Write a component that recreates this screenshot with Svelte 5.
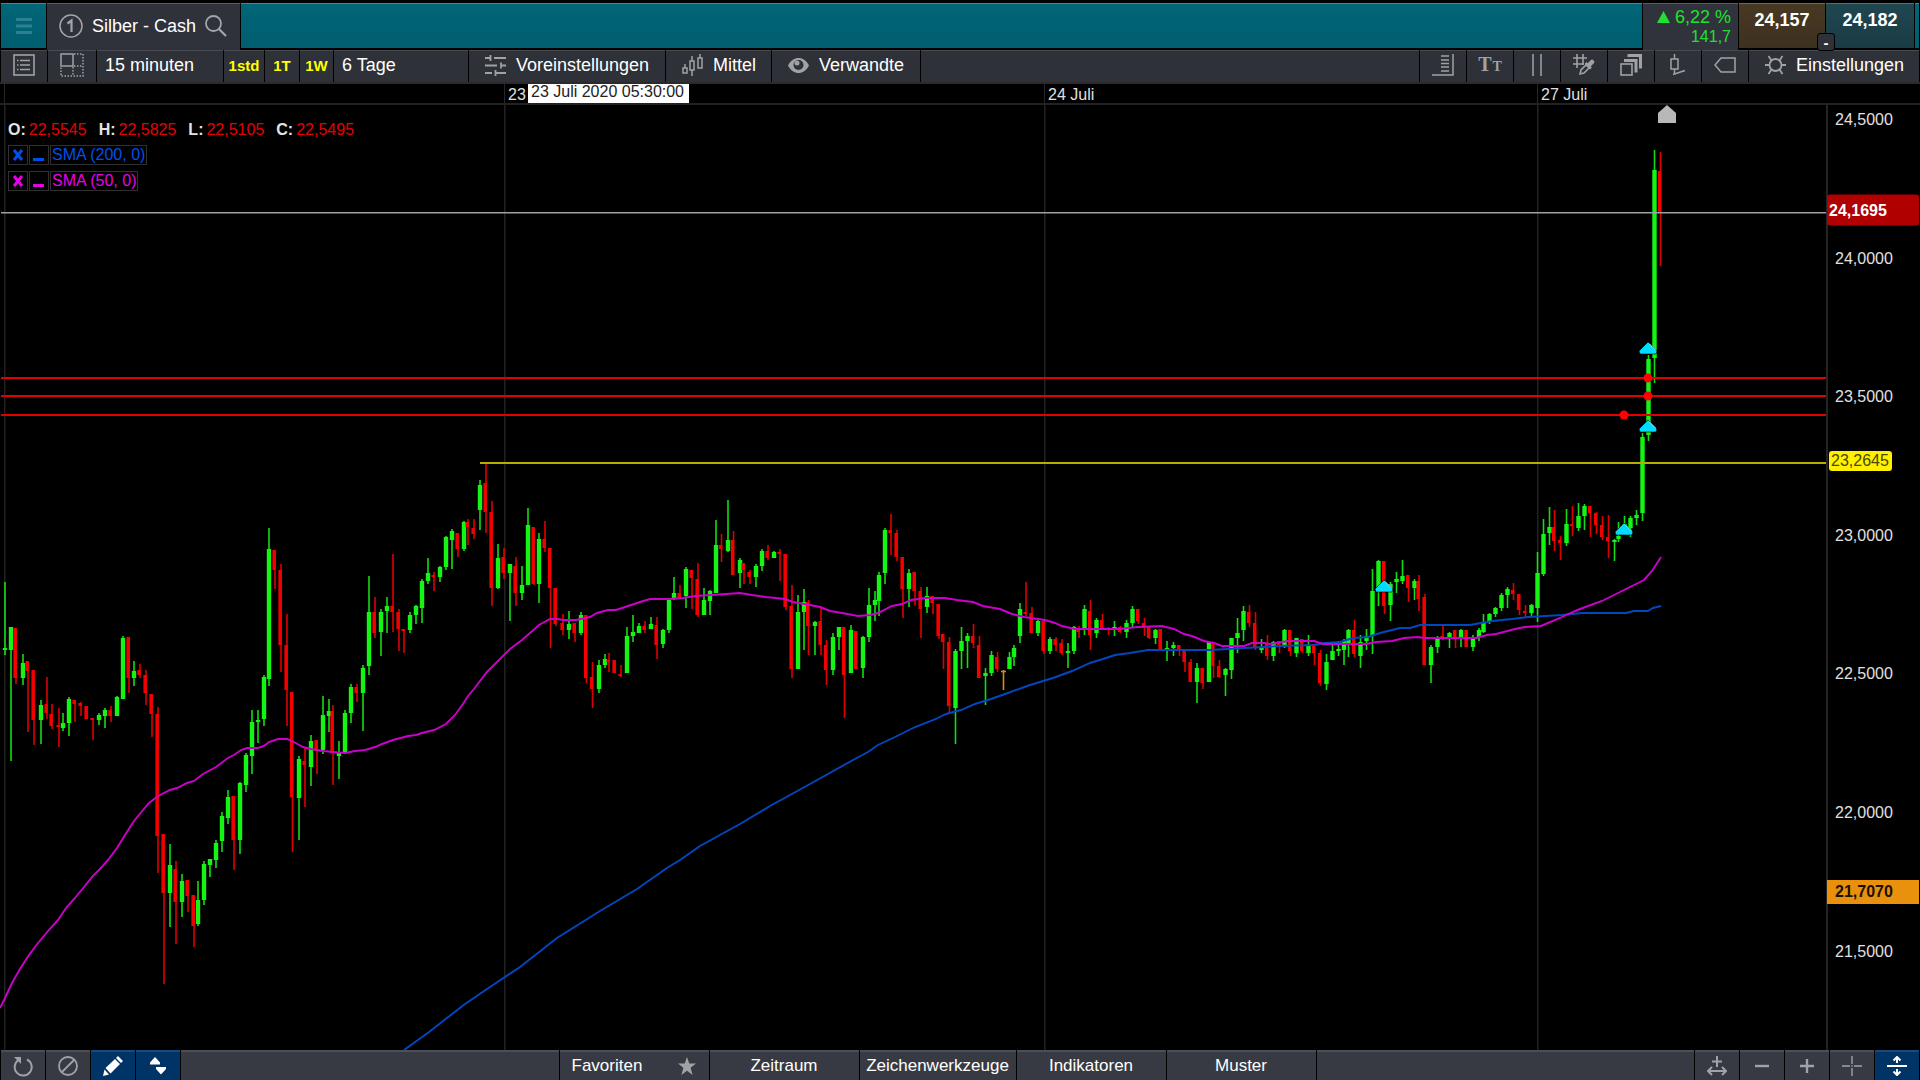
<script lang="ts">
  // Plot space: x runs 0..1826, y runs 105..1050 (one unit per chart pixel).
  const PLOT = { width: 1826, top: 105, height: 945 };

  // Price scale: 24.5 sits at y 120, half a unit takes 138.6.
  const priceY = (price: number) => 120 + (24.5 - price) * 277.2;
  const pctY = (price: number) => ((priceY(price) - PLOT.top) / PLOT.height) * 100;
  const pctX = (x: number) => (x / PLOT.width) * 100;
  const fmt = (price: number) => price.toFixed(4).replace(".", ",");

  const ticks = [24.5, 24, 23.5, 23, 22.5, 22, 21.5];

  const days = [
    { x: 4, label: "" },
    { x: 504, label: "23" },
    { x: 1044, label: "24 Juli" },
    { x: 1537, label: "27 Juli" },
  ];

  const ohlc = [
    { key: "O", value: 22.5545 },
    { key: "H", value: 22.5825 },
    { key: "L", value: 22.5105 },
    { key: "C", value: 22.5495 },
  ];

  const studies = [
    { name: "SMA (200, 0)", tone: "blue" },
    { name: "SMA (50, 0)", tone: "pink" },
  ];

  const alerts = [377, 395, 414];

  const triangles = [
    [1384, 580],
    [1624, 523],
    [1648, 420],
    [1648, 342],
  ];

  const dots = [
    [1648, 377],
    [1648, 395],
    [1624, 414],
  ];

  // x, high, open, close, low
  const candles = [
    [5,582,650,648,655],[11,627,650,627,761],[16,628,628,678,684],[23,654,678,663,685],[28,661,661,671,732],
    [34,670,670,720,745],[41,700,720,705,744],[47,677,704,713,719],[52,704,714,726,729],[59,708,725,726,747],
    [63,713,728,723,731],[69,697,723,699,736],[75,700,700,704,722],[81,702,703,706,716],[87,706,706,719,719],
    [93,718,718,720,740],[99,713,720,715,725],[105,708,716,710,728],[111,706,710,716,722],[117,696,716,697,716],
    [123,636,699,638,699],[129,637,637,678,693],[134,661,678,671,686],[140,664,670,675,678],[146,670,675,693,705],
    [152,694,694,714,737],[158,707,714,836,873],[164,834,834,893,984],[170,844,893,865,927],[176,861,869,902,944],
    [182,874,902,881,917],[188,880,880,896,912],[194,895,895,926,947],[198,881,924,900,926],[204,861,900,864,905],
    [210,859,865,859,877],[216,840,860,843,868],[222,812,841,816,852],[228,790,818,797,824],[234,796,796,840,870],
    [240,782,840,783,854],[246,753,785,755,792],[252,710,756,722,774],[258,710,722,720,743],[264,675,719,677,726],
    [269,528,679,549,686],[275,550,550,570,589],[281,564,570,645,672],[287,614,645,690,726],[292.5,692,692,797,852],
    [299,756,798,759,840],[305,747,761,765,807],[311,735,767,741,786],[317,740,740,751,774],[323,696,750,715,754],
    [329,699,716,711,732],[333,705,711,753,785],[339,741,756,753,779],[345,710,753,713,754],[351,684,713,687,723],
    [357,684,687,693,702],[363,665,693,668,731],[369,576,666,612,675],[375,597,612,633,638],[381,609,632,612,656],
    [387,597,611,606,633],[393,554,606,612,632],[399,609,612,629,651],[404,629,629,630,653],[410,612,630,615,633],
    [416,605,615,606,624],[422,579,608,581,623],[428,558,581,573,584],[434,572,575,577,591],[440,566,577,567,582],
    [446,536,567,537,570],[452,529,540,531,569],[458,533,533,549,557],[464,521,549,522,551],[468,519,522,527,545],
    [474,519,528,534,539],[480,480,510,485,530],[486,463,483,512,533],[492,501,512,588,606],[498,544,588,558,589],
    [504,548,557,573,579],[510,564,573,564,621],[516,557,566,593,606],[522,566,593,585,600],[528,508,585,525,585],
    [534,527,527,584,585],[539,533,584,539,603],[545,521,539,548,552],[550.5,548,548,588,648],[556,588,588,624,626],
    [563,614,623,630,635],[569,611,630,624,639],[575,623,623,633,642],[581,612,633,615,635],[586.5,615,615,678,683],
    [592.5,662,677,689,708],[599,660,689,665,693],[605,654,665,659,668],[609,653,660,662,672],[615,660,660,673,673],
    [621,665,674,675,677],[627,627,673,636,673],[633,615,636,632,642],[639,623,633,626,633],[645,621,626,630,633],
    [651,617,629,624,629],[657,617,625,645,659],[663,629,644,630,648],[669,599,630,600,633],[674,577,598,593,600],
    [680,585,593,598,598],[686,567,596,569,608],[692,570,570,578,609],[698,563,579,615,617],[704,588,615,600,615],
    [710,590,601,591,615],[716,520,593,545,593],[721.5,534,545,549,562],[728,500,551,540,552],[733.5,531,540,575,575],
    [740,558,573,560,588],[744,563,563,570,584],[750,570,572,577,584],[756,564,577,566,587],[762,549,566,551,571],
    [768,545,551,558,560],[774,551,558,552,558],[780,549,552,553,581],[786,554,554,607,610],[792,585,606,669,678],
    [798,595,669,612,669],[804,589,612,602,650],[808.5,600,602,626,655],[815,621,626,622,655],[821,606,621,645,655],
    [826.5,640,645,670,685],[833,633,670,637,675],[839,627,637,627,650],[844.5,627,627,675,718],[851,625,673,630,673],
    [856.5,631,631,669,669],[863,636,668,637,678],[869,588,637,605,642],[875,591,605,600,621],[879,572,601,575,616],
    [885,528,573,530,584],[891,514,530,533,555],[897,530,533,557,561],[903,557,557,589,618],[909,569,589,573,607],
    [915,572,572,591,605],[921,587,591,609,638],[927,587,607,596,613],[933,596,596,603,614],[939,604,604,636,639],
    [943.5,634,634,642,669],[949.5,637,642,706,713],[955.5,649,708,651,744],[961.5,627,651,641,669],[967.5,633,641,636,668],
    [973.5,624,636,643,648],[979.5,636,645,678,678],[985.5,668,676,673,705],[991.5,651,673,655,676],[997.5,652,657,669,672],
    [1009.5,652,669,657,669],[1014,645,657,648,666],[1020,603,636,609,643],[1026,582,612,614,616],[1032,607,613,633,633],
    [1038,619,633,621,636],[1044,619,621,651,654],[1050,637,651,639,654],[1056,637,639,645,651],[1062,639,643,653,655],
    [1068,643,653,651,668],[1074,626,651,627,654],[1079,626,628,632,638],[1084.5,605,629,609,635],[1090.5,600,611,635,650],
    [1096.5,618,633,620,638],[1102.5,614,620,629,629],[1108.5,627,628,629,635],[1114.5,621,629,627,636],[1120.5,626,627,632,633],
    [1126.5,620,632,623,638],[1132.5,606,623,609,627],[1138.5,609,609,621,624],[1144.5,618,623,627,636],[1149.5,627,627,638,639],
    [1155.5,629,638,630,644],[1161,629,629,649,649],[1167,641,650,648,661],[1173.5,642,648,645,656],[1179.5,645,645,649,656],
    [1185,651,651,662,672],[1191,659,662,682,682],[1197,663,682,668,703],[1203,668,668,683,689],[1209,642,682,642,682],
    [1213.5,642,642,666,678],[1219.5,660,666,677,678],[1225.5,668,675,669,696],[1231.5,638,670,638,679],[1237.5,618,638,633,653],
    [1243.5,606,630,611,641],[1249.5,605,612,623,627],[1255.5,612,623,648,650],[1261.5,639,650,647,653],[1267.5,635,644,656,660],
    [1273.5,641,656,642,661],[1279.5,641,641,647,653],[1284.5,629,645,630,648],[1290.5,630,630,651,656],[1296.5,638,653,638,657],
    [1302.5,639,639,651,653],[1308.5,635,653,645,656],[1314.5,644,644,653,665],[1320.5,650,653,683,686],[1326.5,654,684,662,690],
    [1332.5,642,660,651,660],[1338.5,641,651,649,656],[1344,639,650,641,665],[1348.5,629,644,630,657],[1354.5,620,630,654,657],
    [1360.5,635,656,642,668],[1366.5,629,641,636,650],[1372.5,569,636,591,654],[1378.5,560,590,561,606],[1384.5,561,561,606,614],
    [1390.5,582,605,584,621],[1396.5,572,582,579,593],[1402.5,560,581,576,584],[1408.5,575,575,588,602],[1414.5,579,588,581,600],
    [1419,575,581,599,611],[1425,594,597,665,665],[1431,645,665,647,683],[1437.5,636,647,639,653],[1443,626,636,638,640],
    [1449.5,632,638,633,648],[1455.5,630,630,638,648],[1461,629,638,630,647],[1467,630,630,647,647],[1473,635,647,637,651],
    [1479,628,637,630,641],[1483.5,614,632,622,633],[1489.5,613,622,614,624],[1495.5,607,614,608,617],[1501.5,593,608,595,611],
    [1507.5,587,595,589,608],[1513.5,583,590,594,600],[1519.5,594,594,610,615],[1525.5,605,611,612,617],[1531.5,604,613,605,617],
    [1537.5,552,608,573,622],[1543.5,519,574,534,576],[1549.5,507,533,527,545],[1554.5,510,527,541,551],[1560.5,536,540,543,560],
    [1566.5,509,543,524,546],[1572.5,506,524,525,536],[1578.5,503,528,516,531],[1584.5,504,516,506,530],[1590.5,506,506,513,537],
    [1596.5,512,513,525,534],[1602.5,516,525,537,540],[1608.5,515,537,541,558],[1614.5,539,542,540,561],[1618.5,522,539,536,542],
    [1624.5,516,530,524,532],[1630.5,516,528,518,537],[1636.5,510,518,515,525],[1642.5,433,513,437,521],[1648.5,355,435,359,441],
    [1654.5,150,358,170,383],[1660.5,152,171,213,266],
  ].map(([x, high, open, close, low]) => ({
    x,
    high,
    low,
    up: close < open,
    top: Math.min(open, close),
    size: Math.max(Math.abs(close - open), 2),
  }));

  const sma50 =
    "0,1008 5,998 12,983 20,969 29,955 38,943 48,931 58,920 66,908 75,898 84,887 93,876 100,869 108,860 117,848 125,835 134,821 143,810 149,803 158,796 170,790 177,788 187,783 194,781 203,774 216,767 228,758 234,755 241,750 247,748 258,748 264,746 269,742 278,739 287,739 294,742 303,747 311,749 323,751 333,752 345,753 355,751 365,750 375,747 382,744 393,740 408,736 416,735 422,733 434,730 446,724 455,715 463,704 468,696 474,689 480,681 487,672 498,661 510,649 522,640 530,633 539,625 550,619 558,619 563,620 576,620 590,617 597,613 608,610 616,610 628,606 640,602 650,599 670,599 683,598 695,596 710,595 726,594 740,593 752,595 766,597 785,599 793,602 810,605 820,607 830,611 842,613 858,616 870,615 878,613 892,606 902,604 911,600 925,598 945,598 957,600 973,602 983,606 1000,609 1012,614 1024,617 1045,620 1055,623 1062,626 1075,629 1118,629 1138,627 1162,626 1174,629 1184,634 1192,636 1204,641 1214,643 1222,646 1244,646 1252,643 1264,643 1270,644 1288,641 1314,641 1323,644 1366,644 1376,642 1392,641 1404,638 1418,637 1424,638 1476,638 1487,635 1496,634 1515,629 1525,627 1541,626 1560,618 1568,614 1580,609 1602,601 1612,596 1644,580 1652,571 1661,557";

  const sma200 =
    "404,1050 429,1032 465,1004 490,987 520,967 557,938 600,911 637,889 667,868 680,860 700,846 740,824 770,806 810,784 853,760 868,752 878,745 895,737 915,727 936,719 946,714 961,710 975,704 991,699 1008,693 1030,685 1053,678 1072,671 1090,663 1103,659 1115,655 1130,653 1148,650 1210,650 1228,649 1244,648 1265,647 1280,646 1314,645 1325,643 1340,642 1353,638 1368,637 1380,633 1400,628 1410,628 1420,625 1470,625 1492,621 1512,619 1528,617 1545,616 1562,615 1582,613 1626,613 1634,611 1648,611 1653,608 1661,606";
</script>

<div class="app">
  <header class="titlebar">
    <button class="menu" aria-label="Menü">
      <svg width="16" height="16" viewBox="0 0 16 16"><path d="M0 1.5h16M0 8h16M0 14.500h16" stroke="#2c8090" stroke-width="3" /></svg>
    </button>
    <div class="tab">
      <svg width="24" height="24" viewBox="0 0 24 24" fill="none" stroke="#a3a5a9">
        <circle cx="12" cy="12" r="11" stroke-width="1.500" />
        <path d="M8.500 9.500l4-3V18" stroke-width="2.200" />
      </svg>
      <span>Silber - Cash</span>
      <button class="search" aria-label="Suchen">
        <svg width="22" height="22" viewBox="0 0 22 22" fill="none" stroke="#a3a5a9" stroke-width="1.800">
          <circle cx="8.500" cy="8.500" r="7.500" />
          <path d="M14 14l7 7" stroke-width="2.200" />
        </svg>
      </button>
    </div>
    <div class="strip"></div>
    <div class="change">
      <div class="pct">
        <svg width="13" height="12" viewBox="0 0 13 12"><path d="M6.500 0L13 12H0z" fill="#22e02f" /></svg>
        <span>6,22 %</span>
      </div>
      <div class="points">141,7</div>
    </div>
    <button class="quote sell">24,157</button>
    <button class="quote buy">24,182<span class="spread">-</span></button>
    <div class="edge"></div>
  </header>

  <nav class="toolbar">
    <button class="tool w46" aria-label="Liste">
      <svg width="22" height="22" viewBox="0 0 22 22" fill="none" stroke="#a0a2a6">
        <rect x="1" y="1" width="20" height="20" stroke-width="1.600" />
        <path d="M7 6.500h10M7 11h10M7 15.500h10" stroke-width="1.600" />
        <path d="M4 6.500h1.500M4 11h1.500M4 15.500h1.500" stroke-width="1.600" />
      </svg>
    </button>
    <button class="tool w48" aria-label="Layout">
      <svg width="24" height="24" viewBox="0 0 24 24" fill="none" stroke="#a0a2a6">
        <rect x="1" y="1" width="12" height="12" stroke-width="1.500" />
        <path d="M14 1h9v22H1V14M13 14v9M14 13h9" stroke-width="1.500" stroke-dasharray="1.500 1.500" />
      </svg>
    </button>
    <button class="tool label interval">15 minuten</button>
    <button class="tool quick w40">1std</button>
    <button class="tool quick w34">1T</button>
    <button class="tool quick w33">1W</button>
    <button class="tool label range">6 Tage</button>
    <button class="tool labeled presets">
      <svg width="21" height="21" viewBox="0 0 21 21" stroke="#a0a2a6" stroke-width="1.800" fill="none">
        <path d="M0 3h5M9 3h12M0 10.500h12M17 10.500h4M0 18h7M11 18h10M5.500 0v6M16 7.500v6M10.500 15v6" />
      </svg>
      <span>Voreinstellungen</span>
    </button>
    <button class="tool labeled middle">
      <svg width="21" height="22" viewBox="0 0 21 22" stroke="#a0a2a6" stroke-width="1.500" fill="none">
        <rect x="1" y="14" width="4" height="5" />
        <rect x="8" y="7" width="4" height="9" />
        <rect x="16" y="4" width="4" height="10" />
        <path d="M3 10v4M10 2v5M10 16v6M18 0v4" />
      </svg>
      <span>Mittel</span>
    </button>
    <button class="tool labeled related">
      <svg width="21" height="15" viewBox="0 0 21 15">
        <path d="M0 7.500C3 2 6.500 0 10.500 0S18 2 21 7.500C18 13 14.500 15 10.500 15S3 13 0 7.500z" fill="#a0a2a6" />
        <circle cx="10.500" cy="7" r="5" fill="#2e3138" />
        <circle cx="9" cy="5" r="2.500" fill="#a0a2a6" />
      </svg>
      <span>Verwandte</span>
    </button>
    <div class="tool spacer"></div>
    <button class="tool w46" aria-label="Preisskala">
      <svg width="22" height="22" viewBox="0 0 22 22" stroke="#a0a2a6" stroke-width="1.500" fill="none">
        <path d="M0 21h21V0M9 2h8M9 6h8M9 9.500h8M9 13h8M9 17h8" />
      </svg>
    </button>
    <button class="tool w46 type" aria-label="Schrift"><span class="big">T</span><span class="small">T</span></button>
    <button class="tool w46" aria-label="Parallel">
      <svg width="10" height="22" viewBox="0 0 10 22" stroke="#a0a2a6" stroke-width="1.500"><path d="M1 0v22M9 0v22" /></svg>
    </button>
    <button class="tool w46" aria-label="Rasterfarbe">
      <svg width="22" height="22" viewBox="0 0 22 22" stroke="#a0a2a6" stroke-width="1.600" fill="none">
        <path d="M0 4h14M0 10h11M4 0v14M10 0v11" />
        <path d="M7 20l1-4 6-6 3 3-6 6z" />
        <path d="M12.500 9l5.500 5.500" stroke-width="2.500" />
        <path d="M15.500 11.500L19 8" stroke-width="4.500" stroke-linecap="round" />
      </svg>
    </button>
    <button class="tool w46" aria-label="Ebenen">
      <svg width="22" height="22" viewBox="0 0 22 22" fill="none" stroke="#a0a2a6">
        <rect x="1" y="10" width="11" height="11" stroke-width="1.600" />
        <path d="M4 6.500h12v12M7.500 1.500h13v13" stroke-width="3" />
      </svg>
    </button>
    <button class="tool w46" aria-label="Kerzenwerkzeug">
      <svg width="16" height="22" viewBox="0 0 16 22" stroke="#a0a2a6" stroke-width="1.500" fill="none">
        <rect x="1" y="5" width="7" height="10" />
        <path d="M4.500 0v5M4.500 15v5M3 20.500l12-4" />
      </svg>
    </button>
    <button class="tool w46" aria-label="Etikett">
      <svg width="22" height="16" viewBox="0 0 22 16" stroke="#a0a2a6" stroke-width="1.500" fill="none"><path d="M7 1h14v14H7L1 8z" /></svg>
    </button>
    <button class="tool labeled settings">
      <svg width="21" height="20" viewBox="0 0 21 20" stroke="#a0a2a6" stroke-width="1.800" fill="none">
        <circle cx="10.500" cy="10" r="6" />
        <path d="M0 10h4.500M16.500 10H21M6.500 5.500L3.500 1M14.500 5.500l3-4.500M6.500 14.500l-3 4.500M14.500 14.500l3 4.500" />
      </svg>
      <span>Einstellungen</span>
    </button>
  </nav>

  <main class="chart">
    <div class="time-axis">
      {#each days as day}
        <div class="day" style:left="{pctX(day.x)}%">{day.label}</div>
      {/each}
      <div class="cursor-time" style:left="{pctX(528)}%">23 Juli 2020 05:30:00</div>
    </div>
    <div class="corner"></div>

    <div class="plot">
      <svg class="canvas" viewBox="0 {PLOT.top} {PLOT.width} {PLOT.height}">
        {#each days as day}
          <rect x={day.x} y="105" width="1.500" height="945" fill="#222" />
        {/each}

        {#each candles as c}
          <g fill={c.up ? "#14f514" : "#f50000"}>
            <rect x={c.x - 0.8} y={c.high} width="1.600" height={c.low - c.high} opacity="0.900" />
            <rect x={c.up ? c.x - 2.2 : c.x - 2.6} y={c.top} width={c.up ? 4.4 : 3.4} height={c.size} />
          </g>
        {/each}
        <path d="M1003.500 670v20M1001 671.500h5" stroke="#d98a10" stroke-width="1.600" />

        <polyline points={sma200} fill="none" stroke="#0048c0" stroke-width="1.900" />
        <polyline points={sma50} fill="none" stroke="#cc00cc" stroke-width="1.900" />

        <rect x="1" y="212" width="1825" height="1.500" fill="#a0a0a0" />
        {#each alerts as y}
          <rect x="1" {y} width="1825" height="2" fill="#e00000" />
        {/each}
        <rect x="480" y="462" width="1346" height="2" fill="#bcac00" />

        {#each dots as [x, y]}
          <circle cx={x} cy={y + 1} r="4.500" fill="#ff0000" />
        {/each}
        {#each triangles as [x, y]}
          <path d="M{x} {y}l9 9-1 3h-16l-1-3z" fill="#00dcff" stroke="#000" stroke-width="0.600" />
          <path d="M{x + 1} {y + 1.500}l6.500 6.500" stroke="#9feeff" stroke-width="1" />
        {/each}
        <path d="M1667 105l9 8v10h-18v-10z" fill="#b8b8b8" />
      </svg>

      <div class="legend">
        <div class="ohlc">
          {#each ohlc as item}
            <div class="ohlc-item"><b>{item.key}:</b><span>{fmt(item.value)}</span></div>
          {/each}
        </div>
        {#each studies as study}
          <div class="study {study.tone}">
            <button aria-label="{study.name} entfernen">
              <svg width="12" height="12" viewBox="0 0 12 12"><path d="M2 1l8 10M10 1L2 11" stroke="currentColor" stroke-width="3" /></svg>
            </button>
            <button aria-label="{study.name} minimieren">
              <svg width="12" height="12" viewBox="0 0 12 12"><path d="M0 10.500h11" stroke="currentColor" stroke-width="3" /></svg>
            </button>
            <span class="study-name">{study.name}</span>
          </div>
        {/each}
      </div>
    </div>

    <div class="price-axis">
      {#each ticks as price}
        <div class="tick" style:top="{pctY(price)}%">{fmt(price)}</div>
      {/each}
      <div class="tag last" style:top="{pctY(24.1765)}%">24,1695</div>
      <div class="tag level" style:top="{pctY(23.2699)}%">23,2645</div>
      <div class="tag marker" style:top="{pctY(21.7149)}%">21,7070</div>
    </div>
  </main>

  <footer class="bottombar">
    <button class="cell square" aria-label="Zurücksetzen">
      <svg width="20" height="21" viewBox="0 0 20 21" fill="none" stroke="#a0a2a6" stroke-width="2">
        <path d="M14 3.500A8.500 8.500 0 1 1 5.500 4" />
        <path d="M1 1h7v7z" fill="#a0a2a6" stroke="none" />
      </svg>
    </button>
    <button class="cell square" aria-label="Ausblenden">
      <svg width="20" height="20" viewBox="0 0 20 20" fill="none" stroke="#a0a2a6" stroke-width="1.800">
        <circle cx="10" cy="10" r="9" /><path d="M16 4L4 16" />
      </svg>
    </button>
    <button class="cell square active" aria-label="Zeichnen">
      <svg width="20" height="20" viewBox="0 0 20 20" fill="#fff">
        <path d="M0 20l1.500-6.500 4.500 5zM2.500 12L12 3l5 5-9.500 9.500zM13 2l2-2 5 5-2 2z" />
      </svg>
    </button>
    <button class="cell square active" aria-label="Sortieren">
      <svg width="16" height="18" viewBox="0 0 16 18" fill="#fff">
        <path d="M5 0l5 5.500V7.500H0V5.500zM6 10h10V12l-5 5.500L6 12z" />
      </svg>
    </button>
    <div class="cell spacer"></div>
    <button class="cell menu-item favorites">
      <span>Favoriten</span>
      <svg width="18" height="18" viewBox="0 0 20 20"><path d="M10 0l2.500 7.300H20l-6 4.600L16.200 20 10 15.200 3.800 20 6 11.900 0 7.300h7.500z" fill="#a0a2a6" /></svg>
    </button>
    <button class="cell menu-item">Zeitraum</button>
    <button class="cell menu-item wide">Zeichenwerkzeuge</button>
    <button class="cell menu-item">Indikatoren</button>
    <button class="cell menu-item">Muster</button>
    <div class="cell spacer"></div>
    <button class="cell square" aria-label="Breite anpassen">
      <svg width="20" height="20" viewBox="0 0 20 20" stroke="#a0a2a6" stroke-width="2" fill="none">
        <path d="M10 0v11M5 5.500h10M1 15h18M5 11l-4 4 4 4M15 11l4 4-4 4" />
      </svg>
    </button>
    <button class="cell square" aria-label="Verkleinern">
      <svg width="14" height="14" viewBox="0 0 14 14" stroke="#a0a2a6" stroke-width="2.400"><path d="M0 7h14" /></svg>
    </button>
    <button class="cell square" aria-label="Vergrößern">
      <svg width="14" height="14" viewBox="0 0 14 14" stroke="#a0a2a6" stroke-width="2.400"><path d="M0 7h14M7 0v14" /></svg>
    </button>
    <button class="cell square" aria-label="Fadenkreuz">
      <svg width="20" height="20" viewBox="0 0 20 20" stroke="#a0a2a6" stroke-width="1.400"><path d="M0 10h8M12 10h8M10 0v8M10 12v8M9.300 10h1.400" /></svg>
    </button>
    <button class="cell square active" aria-label="Höhe anpassen">
      <svg width="20" height="20" viewBox="0 0 20 20" stroke="#fff" stroke-width="2" fill="none">
        <path d="M0 10h20M10 1v6M6.500 4.500L10 1l3.500 3.500M10 13v6M6.500 15.500L10 19l3.500-3.500" />
      </svg>
    </button>
  </footer>
</div>

<style>
  :global(body) {
    margin: 0;
    background: #000;
  }

  .app {
    display: flex;
    flex-direction: column;
    min-height: 100vh;
    background: #000;
    color: #fff;
    font-family: "Liberation Sans", Arial, sans-serif;
    font-size: 18px;
    line-height: 20px;
  }

  button {
    margin: 0;
    padding: 0;
    border: 0;
    background: none;
    color: inherit;
    font: inherit;
    cursor: pointer;
  }

  svg {
    display: block;
    flex-shrink: 0;
  }

  /* title bar */
  .titlebar {
    display: flex;
    align-items: flex-start;
    gap: 1px;
    height: 47px;
    padding: 3px 1px 0;
  }

  .titlebar > * {
    box-sizing: border-box;
    height: 45px;
    border-top: 1px solid #0aa0ba;
  }

  .menu,
  .strip,
  .edge {
    background: linear-gradient(#006678, #005e70);
  }

  .menu {
    display: flex;
    align-items: center;
    justify-content: center;
    width: 45px;
  }

  .strip {
    flex: 1;
  }

  .edge {
    width: 4px;
  }

  .tab {
    display: flex;
    align-items: center;
    gap: 9px;
    height: 47px;
    padding: 0 13px 2px 12px;
    border-color: #5a5d63;
    background: #2f323a;
  }

  .change {
    width: 95px;
    height: 47px;
    padding: 3px 7px 0 0;
    border-color: #5a5d63;
    background: #30333b;
    color: #22e02f;
    text-align: right;
  }

  .pct {
    display: flex;
    align-items: center;
    justify-content: flex-end;
    gap: 5px;
  }

  .points {
    font-size: 16px;
  }

  .quote {
    display: flex;
    justify-content: center;
    padding-top: 6px;
    font-weight: 700;
  }

  .sell {
    width: 86px;
    border-color: #77674e;
    background: linear-gradient(#483923, #3d301e);
  }

  .buy {
    position: relative;
    width: 88px;
    border-color: #4f7278;
    background: linear-gradient(#1f4750, #1a3b43);
  }

  .spread {
    position: absolute;
    left: -9px;
    bottom: -3px;
    box-sizing: border-box;
    width: 18px;
    height: 18px;
    border: 1px solid #000;
    border-radius: 3px;
    background: #2e3138;
    font-size: 15px;
    line-height: 18px;
    text-align: center;
  }

  /* chart toolbar */
  .toolbar {
    display: flex;
    gap: 1px;
    height: 32px;
    padding: 0 1px;
  }

  .tool {
    display: flex;
    align-items: center;
    justify-content: center;
    box-sizing: border-box;
    padding-bottom: 3px;
    border-top: 1px solid #484b51;
    background: #2e3138;
  }

  .spacer {
    flex: 1;
  }

  .w33 { width: 33px; }
  .w34 { width: 34px; }
  .w40 { width: 40px; }
  .w46 { width: 46px; }
  .w48 { width: 48px; }

  .label {
    justify-content: flex-start;
    padding-left: 8px;
  }

  .interval { width: 126px; }
  .range { width: 134px; }

  .quick {
    padding-bottom: 1px;
    color: #ffff00;
    font-size: 15px;
    font-weight: 700;
  }

  .labeled {
    justify-content: flex-start;
    gap: 10px;
    padding-left: 16px;
  }

  .presets { width: 196px; }
  .middle { width: 105px; }
  .related { width: 148px; }
  .settings { width: 170px; }

  .type {
    align-items: baseline;
    gap: 1px;
    padding-top: 3px;
    color: #a0a2a6;
    font-family: "Liberation Serif", serif;
    font-weight: 700;
  }

  .big { font-size: 20px; }
  .small { font-size: 14px; }

  /* chart */
  .chart {
    display: grid;
    grid-template-columns: minmax(0, 1fr) 94px;
    flex: 1;
    align-content: start;
    font-size: 16px;
    line-height: 18px;
  }

  .time-axis,
  .corner {
    position: relative;
    box-sizing: border-box;
    height: 23px;
    border-top: 2px solid #2a2a2a;
    border-bottom: 2px solid #222;
  }

  .day {
    position: absolute;
    top: 0;
    height: 19px;
    padding-left: 3px;
    border-left: 1px solid #262626;
    color: #e0e0e0;
    line-height: 22px;
  }

  .cursor-time {
    position: absolute;
    top: 0;
    box-sizing: border-box;
    height: 19px;
    padding: 0 5px 0 3px;
    background: #fff;
    color: #222;
    line-height: 16px;
    white-space: nowrap;
  }

  .plot {
    position: relative;
  }

  .canvas {
    width: 100%;
    height: auto;
  }

  .legend {
    position: absolute;
    top: 16px;
    left: 8px;
    display: flex;
    flex-direction: column;
    gap: 6px;
  }

  .ohlc {
    display: flex;
    gap: 12px;
  }

  .ohlc-item {
    display: flex;
    gap: 3px;
    color: #e80000;
  }

  .ohlc-item b {
    color: #e4e4e4;
  }

  .study {
    display: flex;
    gap: 1px;
    height: 20px;
  }

  .study button {
    display: flex;
    align-items: center;
    justify-content: center;
    width: 20px;
    border: 1px solid #303030;
  }

  .study-name {
    padding: 0 1px;
    border: 1px solid #303030;
  }

  .blue { color: #0050e8; }
  .pink { color: #e800e8; }

  .price-axis {
    position: relative;
    border-left: 2px solid #242424;
  }

  .tick,
  .tag {
    position: absolute;
    transform: translateY(-50%);
  }

  .tick {
    left: 7px;
    color: #e0e0e0;
  }

  .tag {
    box-sizing: border-box;
  }

  .last {
    left: -1px;
    right: 1px;
    padding: 7px 2px 6px;
    border-radius: 3px;
    background: #b00000;
    font-weight: 700;
  }

  .level {
    left: 1px;
    padding: 1px 3px 1px 2px;
    border-radius: 3px;
    background: #fff000;
    color: #4a4600;
  }

  .marker {
    left: -1px;
    right: 1px;
    padding: 3px 8px;
    background: #e9900c;
    color: #1c1000;
    font-weight: 700;
  }

  /* bottom bar */
  .bottombar {
    display: flex;
    gap: 1px;
    height: 30px;
    padding: 0 1px;
    font-size: 17px;
  }

  .cell {
    display: flex;
    align-items: center;
    justify-content: center;
    box-sizing: border-box;
    border-top: 2px solid #4b4f57;
    background: #373a42;
  }

  .square {
    width: 44px;
  }

  .active {
    border-color: #1c4a78;
    background: #003366;
  }

  .menu-item {
    width: 149px;
  }

  .wide {
    width: 156px;
  }

  .favorites {
    justify-content: space-between;
    padding: 0 13px 0 12px;
  }
</style>
